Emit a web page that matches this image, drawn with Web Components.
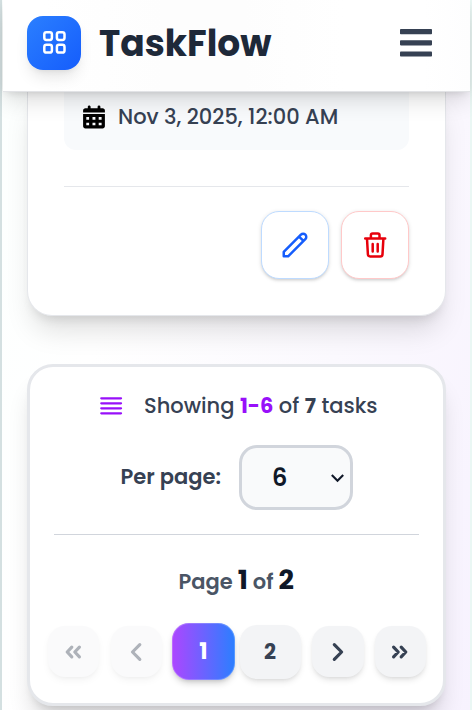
<!DOCTYPE html>
<html lang="en">
<head>
<meta charset="utf-8">
<title>TaskFlow</title>
<style>
html,body{margin:0;height:100%;overflow:hidden}
body{font-family:Poppins,Inter,sans-serif;font-feature-settings:"cv11";color:#364153}
</style>
</head>
<body>
<task-app></task-app>
<script>
const define = (name, html) => customElements.define(name, class extends HTMLElement {
  connectedCallback() {
    if (this.shadowRoot) return;
    this.attachShadow({mode: 'open'}).innerHTML = '<style>*{box-sizing:border-box}</style>' + html;
  }
});

/* A single unwrapped line of text. */
define('text-line', `<style>:host{display:block;white-space:pre;flex:none;line-height:1}</style><slot></slot>`);

define('app-header', `<style>
:host{display:flex;align-items:center;position:relative;z-index:2;flex:none;height:92px;margin:0 2px 0 3px;padding:0 38px 6px 24px;background:linear-gradient(90deg,#fff 0 40px,#fdfdfd 160px 240px,#fff 340px 420px,#fdfdfe);border-bottom:1px solid #e2e3e6;box-shadow:0 10px 22px -3px rgba(0,0,0,.16),0 3px 8px -3px rgba(0,0,0,.13)}
.logo{width:54px;height:54px;border-radius:16px;background:linear-gradient(135deg,#2b7fff,#155dfc);display:grid;place-items:center;box-shadow:0 10px 15px -3px rgba(0,0,0,.1),0 4px 6px -4px rgba(0,0,0,.1)}
text-line{font-size:36px;font-weight:700;color:#1e2939;margin:0 auto 0 18px;padding-top:2px}
.menu{display:block}
</style>
<div class="logo"><svg width="27" height="27" viewBox="0 0 27 27" fill="none" stroke="#fff" stroke-width="2.500"><rect x="3.300" y="3.200" width="7.600" height="7.700" rx="2.100"/><rect x="15.900" y="3.200" width="7.600" height="7.700" rx="2.100"/><rect x="3.300" y="15.800" width="7.600" height="7.700" rx="2.100"/><rect x="15.900" y="15.800" width="7.600" height="7.700" rx="2.100"/></svg></div>
<text-line>TaskFlow</text-line>
<svg class="menu" width="32" height="29" viewBox="0 0 32 29" fill="#364153"><rect y="1" width="32" height="5.200" rx=".8"/><rect y="12.200" width="32" height="5.200" rx=".8"/><rect y="23.400" width="32" height="5.200" rx=".8"/></svg>`);

define('icon-button', `<style>
:host{display:grid;place-items:center;box-sizing:border-box;width:68px;height:68px;border:1px solid currentColor;border-radius:18px;background:#fff;box-shadow:0 1px 4px rgba(0,0,0,.12),0 2px 3px -1px rgba(0,0,0,.12)}
::slotted(svg){display:block}
</style><slot></slot>`);

define('task-card', `<style>
:host{display:flex;flex-direction:column;box-sizing:border-box;position:relative;flex:none;height:226px;margin:-2px 26.500px 0 27px;padding:0 36px;background:#fff;border:1px solid #e5e7eb;border-top:0;border-radius:0 0 25px 25px;box-shadow:0 20px 28px -6px rgba(0,0,0,.13),0 8px 12px -6px rgba(0,0,0,.12)}
.date{display:flex;align-items:center;gap:13px;height:60px;padding:0 0 6px 19px;background:#f8fafc;border-radius:0 0 12px 12px}
.date text-line{font-size:21px;font-weight:500;padding-bottom:2px}
.date svg{display:block}
.acts{display:flex;justify-content:flex-end;gap:12px;margin-top:36px;padding-top:24px;border-top:1px solid #e5e7eb}
.edit{color:#bedbff}.del{color:#ffc9c9}
</style>
<div class="date"><svg width="22" height="24" viewBox="0 0 22 25" preserveAspectRatio="none"><path fill="#000" fill-rule="evenodd" d="M6.200.4c.8 0 1.400.6 1.400 1.400v1.500h7V1.800a1.400 1.400 0 0 1 2.800 0v1.500h2.200c1.300 0 2.300 1 2.300 2.300v2.200H.1V5.600c0-1.300 1-2.300 2.300-2.300h2.400V1.800C4.800 1 5.400.4 6.200.4M.1 9.300h21.800v12.900c0 1.300-1 2.300-2.300 2.300H2.400c-1.300 0-2.300-1-2.300-2.300zM3.300 12.500v2.800h2.800v-2.800zm6.200 0v2.800h2.900v-2.800zm6.200 0v2.800h2.900v-2.800zM3.300 18.400v2.800h2.800v-2.800zm6.200 0v2.800h2.900v-2.800zm6.200 0v2.800h2.900v-2.800z"/></svg><text-line>Nov 3, 2025, 12:00 AM</text-line></div>
<div class="acts">
<icon-button class="edit"><svg width="30" height="30" viewBox="0 0 24 24" fill="none" stroke="#155dfc" stroke-width="2" stroke-linecap="round" stroke-linejoin="round"><path d="M15.232 5.232l3.536 3.536m-2.036-5.036a2.500 2.500 0 113.536 3.536L6.500 21.036H3v-3.572L16.732 3.732z"/></svg></icon-button>
<icon-button class="del"><svg width="30" height="30" viewBox="0 0 30 30" fill="none" stroke="#e7000b" stroke-width="2.500" stroke-linecap="round" stroke-linejoin="round"><path d="M5.200 8.500h20M10.900 8.500V5.100c0-1 .7-1.700 1.700-1.700h5.200c1 0 1.700.7 1.700 1.700v3.400M7 8.700l.9 15.600c.1 1.300 1 2.100 2.200 2.100h10.200c1.200 0 2.100-.8 2.200-2.100l.9-15.600M12.700 14v7.500M17.700 14v7.500"/></svg></icon-button>
</div>`);

define('page-button', `<style>
:host{display:grid;place-items:center;flex:none;width:51.500px;height:51px;border-radius:17px;background:#f3f4f6;color:#364153;box-shadow:0 4px 6px -1px rgba(0,0,0,.1),0 2px 4px -2px rgba(0,0,0,.1)}
:host([disabled]){opacity:.4}
:host([wide]){width:61px;height:54px}
:host([current]){width:63px;height:57px;color:#fff;background:linear-gradient(90deg,#ad46ff,#2b7fff);box-shadow:0 4px 7px -1px rgba(0,0,0,.18),0 2px 4px -2px rgba(0,0,0,.15),inset 0 0 0 1px rgba(255,255,255,.2)}
div{display:block;font-size:21px;line-height:1;font-weight:700}
:host([current]) div{font-size:22px}
::slotted(svg){display:block}
</style><div><slot></slot></div>`);

const arrow = d => `<svg width="22" height="22" viewBox="0 0 22 22" fill="none" stroke="currentColor" stroke-width="3.200" stroke-linecap="round" stroke-linejoin="round"><path d="${d}"/></svg>`;

define('pagination-card', `<style>
:host{display:block;box-sizing:border-box;position:relative;flex:none;height:342px;margin:48px 26.500px 0 27px;padding:0 23px;background:#fff;border:3px solid #e5e7eb;border-radius:26px;box-shadow:0 20px 25px -5px rgba(0,0,0,.14),0 8px 10px -6px rgba(0,0,0,.14)}
.row{display:flex}
.show{align-items:baseline;height:78px;padding:28px 0 0 47px;font-size:21px;font-weight:500}
.show svg{margin:1px 21px 0 0;flex:none;align-self:flex-start}
.show .b{font-weight:700}
.purple{color:#9810fa}
.per{align-items:center;height:65px;padding-left:67.500px;gap:17.500px;font-size:21px;font-weight:600}
.per text-line{width:101px;padding-bottom:2px}
.select{display:flex;align-items:center;justify-content:space-between;width:114px;height:65px;padding:0 5px 0 30px;border:3px solid #d1d5dc;border-radius:18px;background:#f9fafb;color:#101828;font-size:24px;line-height:1;font-weight:600}
.rule{height:1px;background:#d1d5dc;margin:24px 1px 0 1px}
.page{align-items:baseline;height:88px;padding:31px 0 0 125.500px;font-size:21px;font-weight:600;color:#4a5565}
.page .b{font-size:27px;font-weight:700;color:#101828}
.pager{align-items:center;height:57px;margin:0 -6px 0 -5.500px}
</style>
<div class="row show"><svg width="23" height="20" viewBox="0 0 23 20" stroke="#9810fa" stroke-width="2.300" stroke-linecap="round"><path d="M1.300 2.300h19.700M1.300 7.300h19.700M1.300 12.300h19.700M1.300 17.300h19.700"/></svg>
<text-line>Showing </text-line><text-line class="b purple">1-6</text-line><text-line> of </text-line><text-line class="b">7</text-line><text-line> tasks</text-line></div>
<div class="row per"><text-line>Per page:</text-line><div class="select"><span>6</span><svg width="15" height="10" viewBox="0 0 15 10" fill="none" stroke="#101828" stroke-width="2.100"><path d="M1.800 2l5.700 5.700L13.200 2"/></svg></div></div>
<div class="rule"></div>
<div class="row page"><text-line>Page </text-line><text-line class="b">1</text-line><text-line> of </text-line><text-line class="b">2</text-line></div>
<div class="row pager">
<page-button disabled style="margin-right:11.500px">${arrow('M9.800 6.200L5.200 11l4.600 4.800M17.400 6.200L12.800 11l4.600 4.800')}</page-button>
<page-button disabled style="margin-right:10px">${arrow('M14.800 3.600L7.500 11l7.300 7.400')}</page-button>
<page-button current style="margin-right:4.500px">1</page-button>
<page-button wide style="margin-right:11.500px">2</page-button>
<page-button style="margin-right:11px">${arrow('M7.300 3.600L14.600 11l-7.300 7.400')}</page-button>
<page-button>${arrow('M4.600 6.200L9.200 11l-4.600 4.800M12.200 6.200l4.600 4.800-4.600 4.800')}</page-button>
</div>`);

define('task-app', `<style>
:host{display:flex;flex-direction:column;box-sizing:border-box;height:710px;overflow:hidden;background:linear-gradient(90deg,#d4e0e1 0 2px,transparent 2px 470px,#eaf7f4 470px),linear-gradient(105deg,#fcfffe 0,#fff 28%,#fbf9fe 65%,#f7f2fe 100%)}
</style><app-header></app-header><task-card></task-card><pagination-card></pagination-card>`);
</script>
</body>
</html>
